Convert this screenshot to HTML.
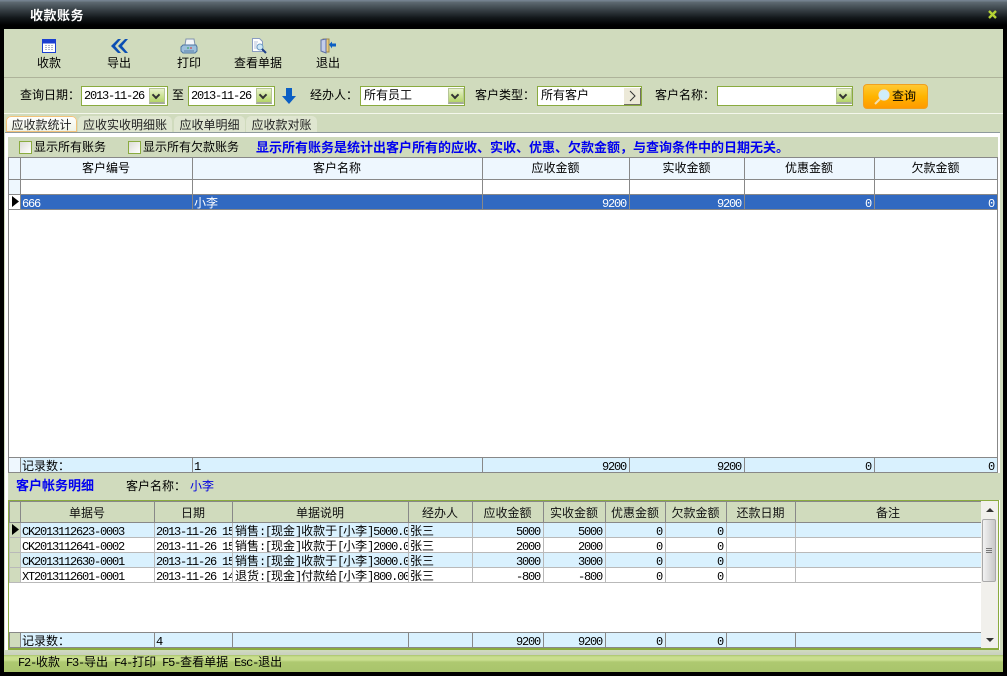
<!DOCTYPE html>
<html lang="zh"><head><meta charset="utf-8"><title>收款账务</title>
<style>
html,body{margin:0;padding:0;background:#000}
#w{position:relative;width:1007px;height:676px;overflow:hidden;background:#000;font:12px/14px "WenQuanYi Zen Hei","Noto Sans CJK SC",sans-serif;color:#000}
#w div,#w svg{position:absolute}
i{font:normal 12px/0 "Liberation Mono",monospace;letter-spacing:-1.2px}
.t{white-space:nowrap}
.b{font-weight:bold}
.c{text-align:center}
.combo{background:#fff;border:1px solid #8aab3f;box-sizing:border-box;height:20px;top:86px}
.dd{top:88px;width:16px;height:16px;background:linear-gradient(#e8f2cc,#b4d568);border:1px solid #b6c596;border-bottom:2px solid #a5a99a;box-sizing:border-box}
.dd:after{content:"";position:absolute;left:3px;top:3px;width:4px;height:4px;border:solid #333;border-width:0 2px 2px 0;transform:rotate(45deg)}
.tab{top:116px;height:16px;background:#dfe6d0;border-radius:5px 5px 0 0;line-height:17px;text-align:center;color:#222}
.cb{top:141px;width:11px;height:11px;border:1px solid #8aab3f;background:linear-gradient(135deg,#dcdcd6,#fff)}
table{position:absolute;border-collapse:collapse;table-layout:fixed;font-size:12px}
td{padding:0 2px 0 1px;white-space:nowrap;overflow:hidden;border:1px solid #888;height:15px;line-height:13px;box-sizing:border-box}
td.r{text-align:right;padding-right:3px}
.h td{text-align:center;background:#eef7fe}
.g td{border-color:#b9b9b9}
.g2 td{text-align:center;background:#d0dbbd;border-color:#888;color:#111}
.bl td{background:#d9f1fe}
.ind{background:#d0dbbd!important}
.ind2{background:#eef7fe!important}
.sel td{background:#3169c1;color:#fff}
</style></head><body>
<div id="w">
<div style="left:0;top:0;width:1007px;height:29px;background:linear-gradient(#74818f 0,#74818f 1px,#5f6a72 2px,#3c454b 9px,#12171a 18px,#000 25px)"></div>
<div class="t b" style="left:30px;top:8px;font-size:13px;color:#fff;letter-spacing:.5px">收款账务</div>
<svg style="left:987px;top:9px" width="11" height="11" viewBox="0 0 11 11"><path d="M2 2L9 9M9 2L2 9" stroke="#b5d334" stroke-width="2.400"/></svg>

<div style="left:4px;top:29px;width:999px;height:643px;background:#d0dbbd"></div>

<!-- toolbar -->
<svg style="left:42px;top:39px" width="15" height="15" viewBox="0 0 15 15"><rect x=".5" y=".5" width="13" height="13" fill="#fff" stroke="#1a3fd0"/><rect x="1" y="1" width="12" height="3.500" fill="#1a3fd0"/><path d="M3 6.500h8M3 8.500h8M3 10.500h8" stroke="#aeb5c8" stroke-width="1"/><path d="M5.500 6v5M8.500 6v5" stroke="#fff"/></svg>
<svg style="left:110px;top:39px" width="18" height="14" viewBox="0 0 18 14"><path d="M8 0L1 7l7 7h3L5 7l6-7zM15 0L8 7l7 7h3L12 7l6-7z" fill="#0b4fb3"/></svg>
<svg style="left:180px;top:38px" width="18" height="16" viewBox="0 0 18 16"><path d="M6 1h8l1 6H5z" fill="#f4f6fa" stroke="#7f93ad"/><path d="M3 7h13l1 2v4l-2 2H3l-2-2V9z" fill="#9dc0dd" stroke="#4f77a3"/><path d="M7 10h2" stroke="#2aa04a"/><path d="M10 10h2" stroke="#d33"/><path d="M4 13h10" stroke="#5b7fa8"/></svg>
<svg style="left:251px;top:38px" width="17" height="16" viewBox="0 0 17 16"><path d="M1.500.500h7l3 3v10h-10z" fill="#fff" stroke="#8a9cc0"/><path d="M3 4h4M3 6h3M3 8h3M3 10h3" stroke="#b5c1da"/><circle cx="9" cy="9" r="3" fill="#cfe8f7" stroke="#6d9cc4"/><path d="M11 11l4 4" stroke="#20408a" stroke-width="2"/></svg>
<svg style="left:320px;top:38px" width="17" height="16" viewBox="0 0 17 16"><path d="M3 1h6v13H3z" fill="#e9c97a" stroke="#a08a4a"/><path d="M1 2l5-1v14l-5-2z" fill="#c3cde9" stroke="#5e6fa8"/><path d="M9 6.500l3-3v2h4v3h-4v2z" fill="#0b5fc4"/></svg>
<div class="t c" style="left:28px;top:56px;width:42px">收款</div>
<div class="t c" style="left:98px;top:56px;width:42px">导出</div>
<div class="t c" style="left:168px;top:56px;width:42px">打印</div>
<div class="t c" style="left:228px;top:56px;width:60px">查看单据</div>
<div class="t c" style="left:307px;top:56px;width:42px">退出</div>
<div style="left:4px;top:77px;width:999px;height:1px;background:#aeb39a"></div>
<div style="left:4px;top:113px;width:999px;height:1px;background:#f4f7ec"></div>

<!-- filters -->
<div class="t" style="left:20px;top:88px">查询日期：</div>
<div class="combo" style="left:81px;width:87px"></div><div class="t" style="left:84px;top:88px"><i>2013-11-26</i></div><div class="dd" style="left:149px"></div>
<div class="t" style="left:172px;top:88px">至</div>
<div class="combo" style="left:188px;width:87px"></div><div class="t" style="left:191px;top:88px"><i>2013-11-26</i></div><div class="dd" style="left:256px"></div>
<svg style="left:282px;top:88px" width="14" height="16" viewBox="0 0 14 16"><path d="M4 0h6v8h4l-7 8-7-8h4z" fill="#0b5fc4"/></svg>
<div class="t" style="left:310px;top:88px">经办人：</div>
<div class="combo" style="left:360px;width:105px"></div><div class="t" style="left:364px;top:88px">所有员工</div><div class="dd" style="left:448px"></div>
<div class="t" style="left:475px;top:88px">客户类型：</div>
<div class="combo" style="left:537px;width:105px"></div><div class="t" style="left:541px;top:88px">所有客户</div>
<div style="left:624px;top:88px;width:17px;height:17px;background:#ece9d8;border-right:1px solid #716f64;border-bottom:1px solid #716f64;box-sizing:border-box"></div>
<svg style="left:628px;top:90px" width="9" height="12" viewBox="0 0 9 12"><path d="M2 1l5 5-5 5" fill="none" stroke="#333"/></svg>
<div class="t" style="left:655px;top:88px">客户名称：</div>
<div class="combo" style="left:717px;width:136px"></div><div class="dd" style="left:836px"></div>
<div style="left:863px;top:84px;width:65px;height:25px;border-radius:4px;background:linear-gradient(#ffc933,#ffb400 50%,#ff9a00);border:1px solid #f0a020;box-sizing:border-box"></div>
<svg style="left:873px;top:88px" width="18" height="18" viewBox="0 0 18 18"><circle cx="11" cy="7" r="5" fill="#cfeefc" stroke="#dfe6ea" stroke-width="1.200"/><path d="M7 11l-5 5" stroke="#f3dfb0" stroke-width="2"/></svg>
<div class="t" style="left:892px;top:89px">查询</div>

<!-- tabs -->
<div class="tab" style="left:6px;width:71px;background:linear-gradient(#fff,#eef2e4);box-shadow:inset 0 0 0 1px #f2c27a">应收款统计</div>
<div class="tab" style="left:78px;width:94px">应收实收明细账</div>
<div class="tab" style="left:174px;width:71px">应收单明细</div>
<div class="tab" style="left:246px;width:71px">应收款对账</div>

<!-- main panel -->
<div style="left:5px;top:132px;width:995px;height:518px;background:#fff;border-top:1px solid #8e9a9c;box-sizing:border-box"></div>
<div style="left:1000px;top:132px;width:3px;height:520px;background:#d0dbbd"></div>
<div style="left:4px;top:133px;width:1px;height:520px;background:#d0dbbd"></div>
<div style="left:8px;top:137px;width:990px;height:20px;background:#cfdabc"></div>
<div class="cb" style="left:19px"></div><div class="t" style="left:34px;top:140px">显示所有账务</div>
<div class="cb" style="left:128px"></div><div class="t" style="left:143px;top:140px">显示所有欠款账务</div>
<div class="t b" style="left:256px;top:140px;font-size:13px;color:#0000f0">显示所有账务是统计出客户所有的应收、实收、优惠、欠款金额，与查询条件中的日期无关。</div>

<div style="left:8px;top:157px;width:1px;height:315px;background:#888"></div>
<div style="left:997px;top:157px;width:1px;height:315px;background:#888"></div>

<table style="left:8px;top:157px;width:989px">
<colgroup><col style="width:12px"><col style="width:172px"><col style="width:290px"><col style="width:147px"><col style="width:115px"><col style="width:130px"><col style="width:123px"></colgroup>
<tr class="h"><td style="height:22px"></td><td style="height:22px;padding-bottom:2px">客户编号</td><td style="padding-bottom:2px">客户名称</td><td style="padding-bottom:2px">应收金额</td><td style="padding-bottom:2px">实收金额</td><td style="padding-bottom:2px">优惠金额</td><td style="padding-bottom:2px">欠款金额</td></tr>
<tr><td class="ind2"></td><td></td><td></td><td></td><td></td><td></td><td></td></tr>
<tr class="sel"><td style="background:#fff;color:#000;padding:0"></td><td><i>666</i></td><td>小李</td><td class="r"><i>9200</i></td><td class="r"><i>9200</i></td><td class="r"><i>0</i></td><td class="r"><i>0</i></td></tr>
</table>
<svg style="left:12px;top:196px" width="7" height="11" viewBox="0 0 7 11"><path d="M0 0l7 5.500L0 11z" fill="#000"/></svg>

<table style="left:8px;top:457px;width:989px" class="bl">
<colgroup><col style="width:12px"><col style="width:172px"><col style="width:290px"><col style="width:147px"><col style="width:115px"><col style="width:130px"><col style="width:123px"></colgroup>
<tr><td class="ind2" style="height:14px"></td><td style="height:14px">记录数：</td><td><i>1</i></td><td class="r"><i>9200</i></td><td class="r"><i>9200</i></td><td class="r"><i>0</i></td><td class="r"><i>0</i></td></tr>
</table>

<!-- details band -->
<div style="left:8px;top:473px;width:992px;height:27px;background:#d0dbbd"></div>
<div class="t b" style="left:16px;top:478px;font-size:13px;color:#0000f0">客户帐务明细</div>
<div class="t" style="left:126px;top:479px">客户名称：</div>
<div class="t" style="left:190px;top:479px;color:#0000e0">小李</div>

<div style="left:8px;top:500px;width:991px;height:150px;border:1px solid #8aab3f;border-width:1px 1px 2px 1px;box-sizing:border-box"></div>

<table style="left:9px;top:501px;width:972px">
<colgroup><col style="width:11px"><col style="width:134px"><col style="width:78px"><col style="width:176px"><col style="width:64px"><col style="width:71px"><col style="width:62px"><col style="width:60px"><col style="width:61px"><col style="width:69px"><col style="width:186px"></colgroup>
<tr class="g2"><td style="height:21px"></td><td style="height:21px">单据号</td><td>日期</td><td>单据说明</td><td>经办人</td><td>应收金额</td><td>实收金额</td><td>优惠金额</td><td>欠款金额</td><td>还款日期</td><td>备注</td></tr>
<tr class="g bl"><td class="ind"></td><td><i>CK2013112623-0003</i></td><td><i>2013-11-26 15</i></td><td style="padding:0 0 0 2px">销售<i>:[</i>现金<i>]</i>收款于<i>[</i>小李<i>]5000.0</i></td><td>张三</td><td class="r"><i>5000</i></td><td class="r"><i>5000</i></td><td class="r"><i>0</i></td><td class="r"><i>0</i></td><td></td><td></td></tr>
<tr class="g"><td class="ind"></td><td><i>CK2013112641-0002</i></td><td><i>2013-11-26 15</i></td><td style="padding:0 0 0 2px">销售<i>:[</i>现金<i>]</i>收款于<i>[</i>小李<i>]2000.0</i></td><td>张三</td><td class="r"><i>2000</i></td><td class="r"><i>2000</i></td><td class="r"><i>0</i></td><td class="r"><i>0</i></td><td></td><td></td></tr>
<tr class="g bl"><td class="ind"></td><td><i>CK2013112630-0001</i></td><td><i>2013-11-26 15</i></td><td style="padding:0 0 0 2px">销售<i>:[</i>现金<i>]</i>收款于<i>[</i>小李<i>]3000.0</i></td><td>张三</td><td class="r"><i>3000</i></td><td class="r"><i>3000</i></td><td class="r"><i>0</i></td><td class="r"><i>0</i></td><td></td><td></td></tr>
<tr class="g"><td class="ind"></td><td><i>XT2013112601-0001</i></td><td><i>2013-11-26 14</i></td><td style="padding:0 0 0 2px">退货<i>:[</i>现金<i>]</i>付款给<i>[</i>小李<i>]800.00</i></td><td>张三</td><td class="r"><i>-800</i></td><td class="r"><i>-800</i></td><td class="r"><i>0</i></td><td class="r"><i>0</i></td><td></td><td></td></tr>
</table>
<svg style="left:12px;top:524px" width="7" height="11" viewBox="0 0 7 11"><path d="M0 0l7 5.500L0 11z" fill="#000"/></svg>

<table style="left:9px;top:632px;width:972px" class="bl">
<colgroup><col style="width:11px"><col style="width:134px"><col style="width:78px"><col style="width:176px"><col style="width:64px"><col style="width:71px"><col style="width:62px"><col style="width:60px"><col style="width:61px"><col style="width:69px"><col style="width:186px"></colgroup>
<tr><td class="ind" style="height:15px"></td><td>记录数：</td><td><i>4</i></td><td></td><td></td><td class="r"><i>9200</i></td><td class="r"><i>9200</i></td><td class="r"><i>0</i></td><td class="r"><i>0</i></td><td></td><td></td></tr>
</table>

<!-- scrollbar -->
<div style="left:981px;top:501px;width:17px;height:147px;background:#f1f0ec"></div>
<svg style="left:985px;top:507px" width="10" height="6" viewBox="0 0 10 6"><path d="M5 1l4 4H1z" fill="#333"/></svg>
<div style="left:982px;top:519px;width:14px;height:63px;border:1px solid #a9a9a9;border-radius:2px;background:linear-gradient(90deg,#f2f2f2,#c8c8c8);box-sizing:border-box"></div>
<svg style="left:985px;top:547px" width="8" height="8" viewBox="0 0 8 8"><path d="M1 1.500h6M1 3.500h6M1 5.500h6" stroke="#777"/></svg>
<svg style="left:985px;top:637px" width="10" height="6" viewBox="0 0 10 6"><path d="M1 1h8L5 5z" fill="#333"/></svg>

<!-- status bar -->
<div style="left:4px;top:650px;width:999px;height:5px;background:linear-gradient(#d0dbbd,#c9cfc0)"></div>
<div style="left:4px;top:655px;width:999px;height:17px;background:linear-gradient(#a9c46c 0,#c9de8e 2px,#c9de8e 5px,#aec970 7px,#a9c46c 100%)"></div>
<div class="t" style="left:18px;top:655px"><i>F2-</i>收款<i> F3-</i>导出<i> F4-</i>打印<i> F5-</i>查看单据<i> Esc-</i>退出</div>
</div>
</body></html>
